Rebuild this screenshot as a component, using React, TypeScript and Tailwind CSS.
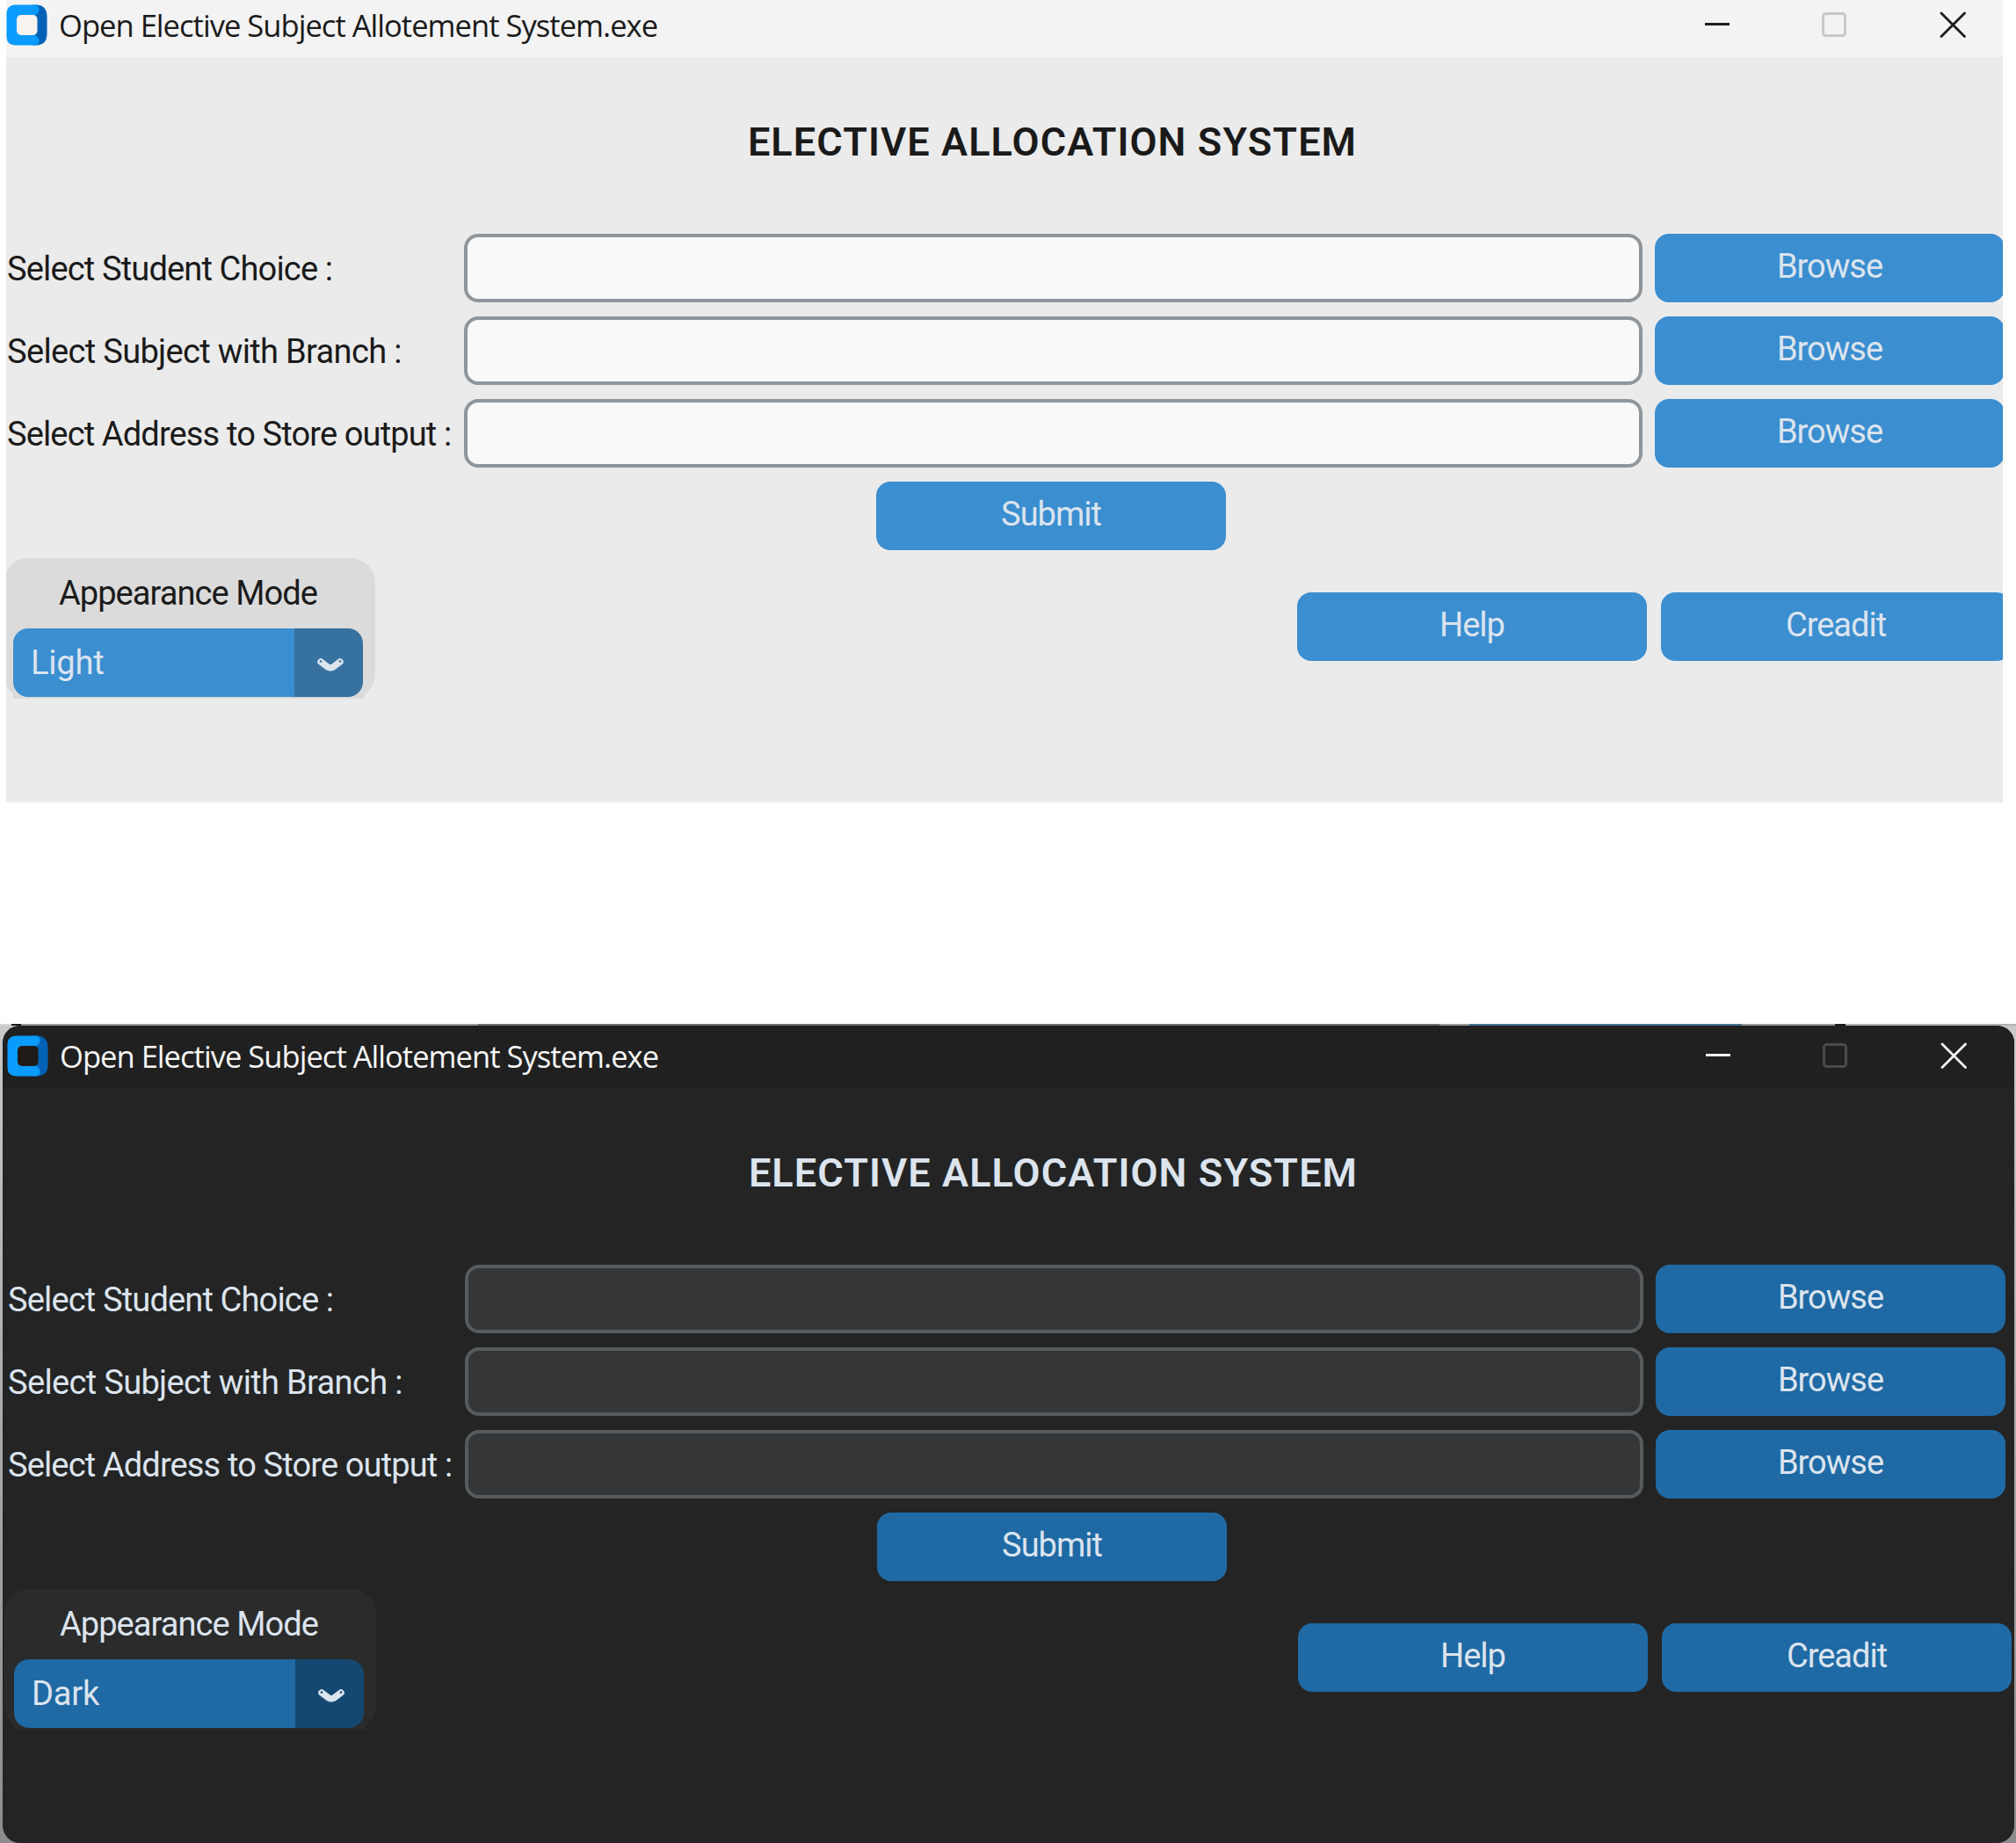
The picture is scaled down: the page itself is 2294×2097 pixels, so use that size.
import React from "react";

type Theme = {
  bar: string;
  barText: string;
  text: string;
  field: string;
  button: string;
  arrow: string;
  panel: string;
  glyph: string;
  box: string;
  hole: string;
  dot: string;
  mode: string;
};

const light: Theme = {
  bar: "bg-[#f3f3f3]",
  barText: "text-[#1a1a1a]",
  text: "text-[#1a1a1a]",
  field: "bg-[#f9f9fa] border-[#8f969b]",
  button: "bg-[#3b8ed0]",
  arrow: "bg-[#36719f]",
  panel: "bg-[#dbdbdb]",
  glyph: "#1c1c1c",
  box: "#c8c8c8",
  hole: "#f7f3f0",
  dot: "#36719f",
  mode: "Light",
};

const dark: Theme = {
  bar: "bg-[#202020]",
  barText: "text-[#f7f7f7]",
  text: "text-[#dce4ee]",
  field: "bg-[#343638] border-[#565b5e]",
  button: "bg-[#1f6aa5]",
  arrow: "bg-[#144870]",
  panel: "bg-[#2b2b2b]",
  glyph: "#f2f2f2",
  box: "#4a4a4a",
  hole: "#211b18",
  dot: "#144870",
  mode: "Dark",
};

function Logo({ hole }: { hole: string }) {
  return (
    <svg width="47" height="47" viewBox="0 0 47 47" className="shrink-0">
      <path d="M30 0.500H36Q46.500 2 46.500 13V34Q46.500 45 36 46.500H30Z" fill="#0062b4" />
      <path
        d="M11 0.500H33Q38 1.500 37.500 6Q37 10 33 12V35Q37 37 37.500 41Q38 45.500 33 46.500H11Q0.500 46.500 0.500 36V11Q0.500 0.500 11 0.500Z"
        fill="#0a9bff"
      />
      <rect x="12" y="12" width="23.500" height="23" rx="5" fill={hole} />
    </svg>
  );
}

function TitleBar({ t }: { t: Theme }) {
  return (
    <div className={`flex h-[65px] w-full items-start ${t.bar}`}>
      <div className="flex w-[1933px] pt-[5px]">
        <Logo hole={t.hole} />
        <span
          className={`ml-[13px] whitespace-nowrap font-['Open_Sans',sans-serif] text-[34.5px] leading-[48px] tracking-[-0.96px] ${t.barText}`}
        >
          Open Elective Subject Allotement System.exe
        </span>
      </div>
      <svg width="297" height="57" viewBox="0 0 297 57" fill="none">
        <path d="M0 27.500H28" stroke={t.glyph} strokeWidth="3" />
        <rect x="134.500" y="15.500" width="25" height="25" rx="3" stroke={t.box} strokeWidth="3" />
        <path d="M269 15L295.500 41.500M295.500 15L269 41.500" stroke={t.glyph} strokeWidth="2.800" strokeLinecap="round" />
      </svg>
    </div>
  );
}

function Button({ t, children, className = "" }: { t: Theme; children: React.ReactNode; className?: string }) {
  return (
    <button
      className={`h-[78px] w-[398px] shrink-0 rounded-[16px] pb-[3px] text-[38px] leading-[75px] tracking-[-1px] text-[#dce4ee] ${t.button} ${className}`}
    >
      {children}
    </button>
  );
}

function Row({ t, label, tracking }: { t: Theme; label: string; tracking: string }) {
  return (
    <div className="flex h-[78px] items-center">
      <label className={`w-[521px] shrink-0 whitespace-nowrap pl-px pt-[2px] text-[38px] leading-[78px] ${tracking} ${t.text}`}>
        {label}
      </label>
      <input className={`h-[78px] w-[1341px] shrink-0 rounded-[16px] border-4 ${t.field}`} />
      <Button t={t} className="ml-[14px]">
        Browse
      </Button>
    </div>
  );
}

function Appearance({ t }: { t: Theme }) {
  return (
    <div className={`-ml-[3px] h-[160px] w-[423px] rounded-[28px] pl-[11px] ${t.panel}`}>
      <div className={`h-[80px] w-[398px] text-center text-[38px] leading-[80px] tracking-[-0.92px] ${t.text}`}>
        Appearance Mode
      </div>
      <div className={`flex h-[80px] w-[400px] pb-[2px] ${t.panel}`}>
        <div className="flex h-[78px] w-[398px] overflow-hidden rounded-[17px]">
          <div className={`w-[320px] pl-[20px] text-[38px] leading-[79px] tracking-[-0.2px] text-[#dce4ee] ${t.button}`}>
            {t.mode}
          </div>
          <div className={`flex flex-1 items-center justify-center ${t.arrow}`}>
            <svg width="32" height="18" viewBox="0 0 32 18" fill="none" className="mt-[5px] ml-[4px]">
              <path d="M5 5L13 11Q16 12.500 19 11L27 5" stroke="#dce4ee" strokeWidth="7.500" strokeLinecap="round" />
              <circle cx="5" cy="4.500" r="1.300" fill={t.dot} />
              <circle cx="27" cy="4.500" r="1.300" fill={t.dot} />
            </svg>
          </div>
        </div>
      </div>
    </div>
  );
}

function AppWindow({ t }: { t: Theme }) {
  return (
    <div className="w-[2286px] font-['Roboto',sans-serif]">
      <TitleBar t={t} />
      <div
        className={`ml-[520px] flex h-[201px] w-[1341px] justify-center whitespace-nowrap text-[45px] font-semibold leading-[194px] tracking-[1.1px] ${t.text}`}
      >
        ELECTIVE ALLOCATION SYSTEM
      </div>
      <div className="flex flex-col gap-4">
        <Row t={t} label="Select Student Choice :" tracking="tracking-[-0.84px]" />
        <Row t={t} label="Select Subject with Branch :" tracking="tracking-[-0.66px]" />
        <Row t={t} label="Select Address to Store output :" tracking="tracking-[-0.86px]" />
      </div>
      <Button t={t} className="mt-4 ml-[990px] block">
        Submit
      </Button>
      <div className="mt-[9px] flex items-start">
        <Appearance t={t} />
        <div className="mt-[39px] ml-[1049px] flex gap-[16px]">
          <Button t={t}>Help</Button>
          <Button t={t}>Creadit</Button>
        </div>
      </div>
    </div>
  );
}

export default function App() {
  return (
    <div className="flex h-[2097px] w-[2294px] flex-col overflow-hidden bg-white">
      <div className="ml-[7px] h-[913px] w-[2272px] shrink-0 overflow-hidden bg-[#ebebeb]">
        <AppWindow t={light} />
      </div>
      <div className="mt-[252px] h-[932px] shrink-0 bg-linear-to-b from-[#c8c8c8] to-[#8c8c8c]">
        <div className="flex h-[2px]">
          <div className="w-[13px] bg-[#d6d6d6]" />
          <div className="w-[11px] bg-[#1a1a1a]" />
          <div className="w-[520px] bg-[#9b9b9b]" />
          <div className="w-[1094px] bg-[#6c6e70]" />
          <div className="w-[34px] bg-[#9b9b9b]" />
          <div className="w-[310px] bg-[#45708f]" />
          <div className="w-[106px] bg-[#9b9b9b]" />
          <div className="w-[12px] bg-[#1a1a1a]" />
          <div className="flex-1 bg-[#b0b0b0]" />
        </div>
        <div className="ml-[3px] h-[930px] w-[2289px] overflow-hidden rounded-[20px] bg-[#242424]">
          <div className="h-[6px] bg-[#202020]" />
          <div className="bg-[linear-gradient(#202020_65px,#242424_65px)] pl-[5px]">
            <AppWindow t={dark} />
          </div>
        </div>
      </div>
    </div>
  );
}
